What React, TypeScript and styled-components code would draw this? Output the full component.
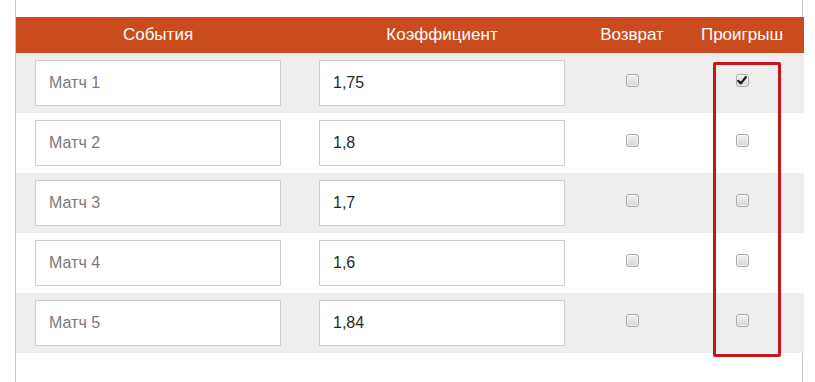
import React from 'react';
import styled, { createGlobalStyle } from 'styled-components';

const GlobalStyle = createGlobalStyle`
  html, body {
    margin: 0;
    padding: 0;
    background: #fff;
    font-family: 'Liberation Sans', Arial, sans-serif;
  }
`;

const rows = [
  { name: 'Матч 1', coef: '1,75', refund: false, lose: true },
  { name: 'Матч 2', coef: '1,8', refund: false, lose: false },
  { name: 'Матч 3', coef: '1,7', refund: false, lose: false },
  { name: 'Матч 4', coef: '1,6', refund: false, lose: false },
  { name: 'Матч 5', coef: '1,84', refund: false, lose: false },
];

const Page = styled.div`
  position: relative;
  margin-left: 15px;
  width: 788px;
  height: 382px;
  padding-top: 17px;
  box-sizing: border-box;
  border-left: 1px solid #c4c4c4;
  border-right: 1px solid #c4c4c4;
`;

const Table = styled.table`
  width: 788px;
  border-collapse: collapse;
  table-layout: fixed;
`;

const HeadCell = styled.th`
  height: 36px;
  padding: 0;
  background: #c94b1e;
  color: #fff;
  font-size: 17px;
  font-weight: normal;
  text-align: center;
  vertical-align: middle;
`;

const Row = styled.tr<{ $odd: boolean }>`
  height: 60px;
  background: ${(p) => (p.$odd ? '#eeeeee' : '#ffffff')};
`;

const Cell = styled.td`
  padding: 0;
  text-align: center;
  vertical-align: middle;
`;

const Field = styled.input`
  display: block;
  margin: 0 auto;
  width: 246px;
  height: 46px;
  box-sizing: border-box;
  padding: 0 0 0 13px;
  border: 1px solid #cccccc;
  background: #fff;
  font-family: 'Liberation Sans', Arial, sans-serif;
  font-size: 16px;
  color: #1f2a1f;
  outline: none;

  &::placeholder {
    color: #7a7a7a;
  }
`;

const Box = styled.span<{ $checked: boolean }>`
  display: inline-flex;
  align-items: center;
  justify-content: center;
  width: 13px;
  height: 13px;
  box-sizing: border-box;
  margin-top: -6px;
  border: 1px solid #a9a9a9;
  border-radius: 3px;
  background: linear-gradient(#f1f1f1, #d6d6d6);
  box-shadow: inset 0 0 0 1px rgba(255, 255, 255, 0.6);
  vertical-align: middle;
`;

const Highlight = styled.div`
  position: absolute;
  left: 697px;
  top: 62px;
  width: 68px;
  height: 295px;
  box-sizing: border-box;
  border: 3px solid #c8141c;
  border-radius: 2px;
  pointer-events: none;
`;

const Check = ({ checked }: { checked: boolean }) => (
  <Box $checked={checked} role="checkbox" aria-checked={checked}>
    {checked && (
      <svg width="10" height="9" viewBox="0 0 10 9">
        <path d="M1.2 4.8 L3.8 7.4 L8.8 1.2" fill="none" stroke="#1a1a1a" strokeWidth="2.2" strokeLinecap="round" strokeLinejoin="round" />
      </svg>
    )}
  </Box>
);

export default function App() {
  return (
    <>
      <GlobalStyle />
      <Page>
        <Table>
          <colgroup>
            <col style={{ width: 284 }} />
            <col style={{ width: 284 }} />
            <col style={{ width: 96 }} />
            <col style={{ width: 124 }} />
          </colgroup>
          <thead>
            <tr>
              <HeadCell>События</HeadCell>
              <HeadCell>Коэффициент</HeadCell>
              <HeadCell>Возврат</HeadCell>
              <HeadCell>Проигрыш</HeadCell>
            </tr>
          </thead>
          <tbody>
            {rows.map((r, i) => (
              <Row key={r.name} $odd={i % 2 === 0}>
                <Cell>
                  <Field placeholder={r.name} readOnly />
                </Cell>
                <Cell>
                  <Field defaultValue={r.coef} readOnly />
                </Cell>
                <Cell>
                  <Check checked={r.refund} />
                </Cell>
                <Cell>
                  <Check checked={r.lose} />
                </Cell>
              </Row>
            ))}
          </tbody>
        </Table>
        <Highlight />
      </Page>
    </>
  );
}
